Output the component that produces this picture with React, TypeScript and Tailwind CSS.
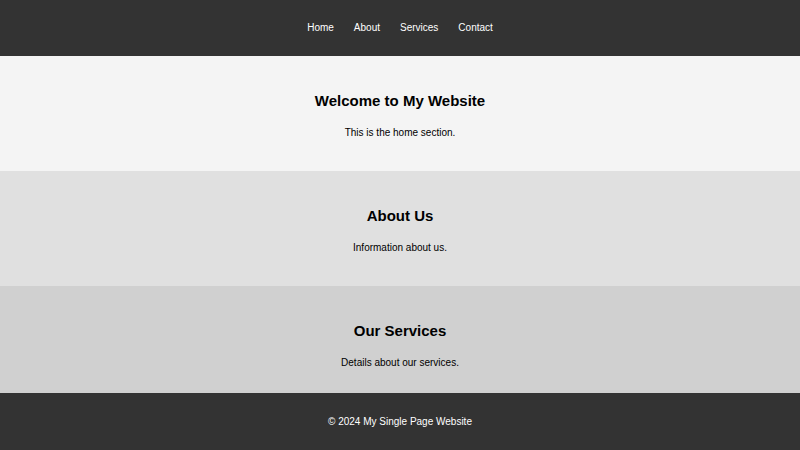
import React from 'react';

const links = ['Home', 'About', 'Services', 'Contact'];

const sections = [
  { id: 'home', title: 'Welcome to My Website', text: 'This is the home section.', bg: 'bg-[#f4f4f4]', h: 'h-[115px]' },
  { id: 'about', title: 'About Us', text: 'Information about us.', bg: 'bg-[#e0e0e0]', h: 'h-[115px]' },
  { id: 'services', title: 'Our Services', text: 'Details about our services.', bg: 'bg-[#d0d0d0]', h: 'h-[107px]' },
];

export default function App() {
  return (
    <div className="w-[800px] h-[450px] overflow-hidden flex flex-col font-['Liberation_Sans',Arial,sans-serif] text-black">
      <header className="h-[56px] shrink-0 bg-[#333333] flex items-center justify-center">
        <nav className="flex gap-[20px] text-[10px] leading-[12px] text-white">
          {links.map(link => (
            <a key={link} href={`#${link.toLowerCase()}`}>{link}</a>
          ))}
        </nav>
      </header>

      {sections.map(s => (
        <section key={s.id} id={s.id} className={`${s.bg} ${s.h} shrink-0 flex flex-col items-center pt-[36px]`}>
          <h2 className="text-[15px] leading-[17px] font-bold">{s.title}</h2>
          <p className="mt-[18px] text-[10px] leading-[12px]">{s.text}</p>
        </section>
      ))}

      <footer className="flex-1 bg-[#333333] flex items-center justify-center text-[10px] leading-[12px] text-white">
        © 2024 My Single Page Website
      </footer>
    </div>
  );
}
